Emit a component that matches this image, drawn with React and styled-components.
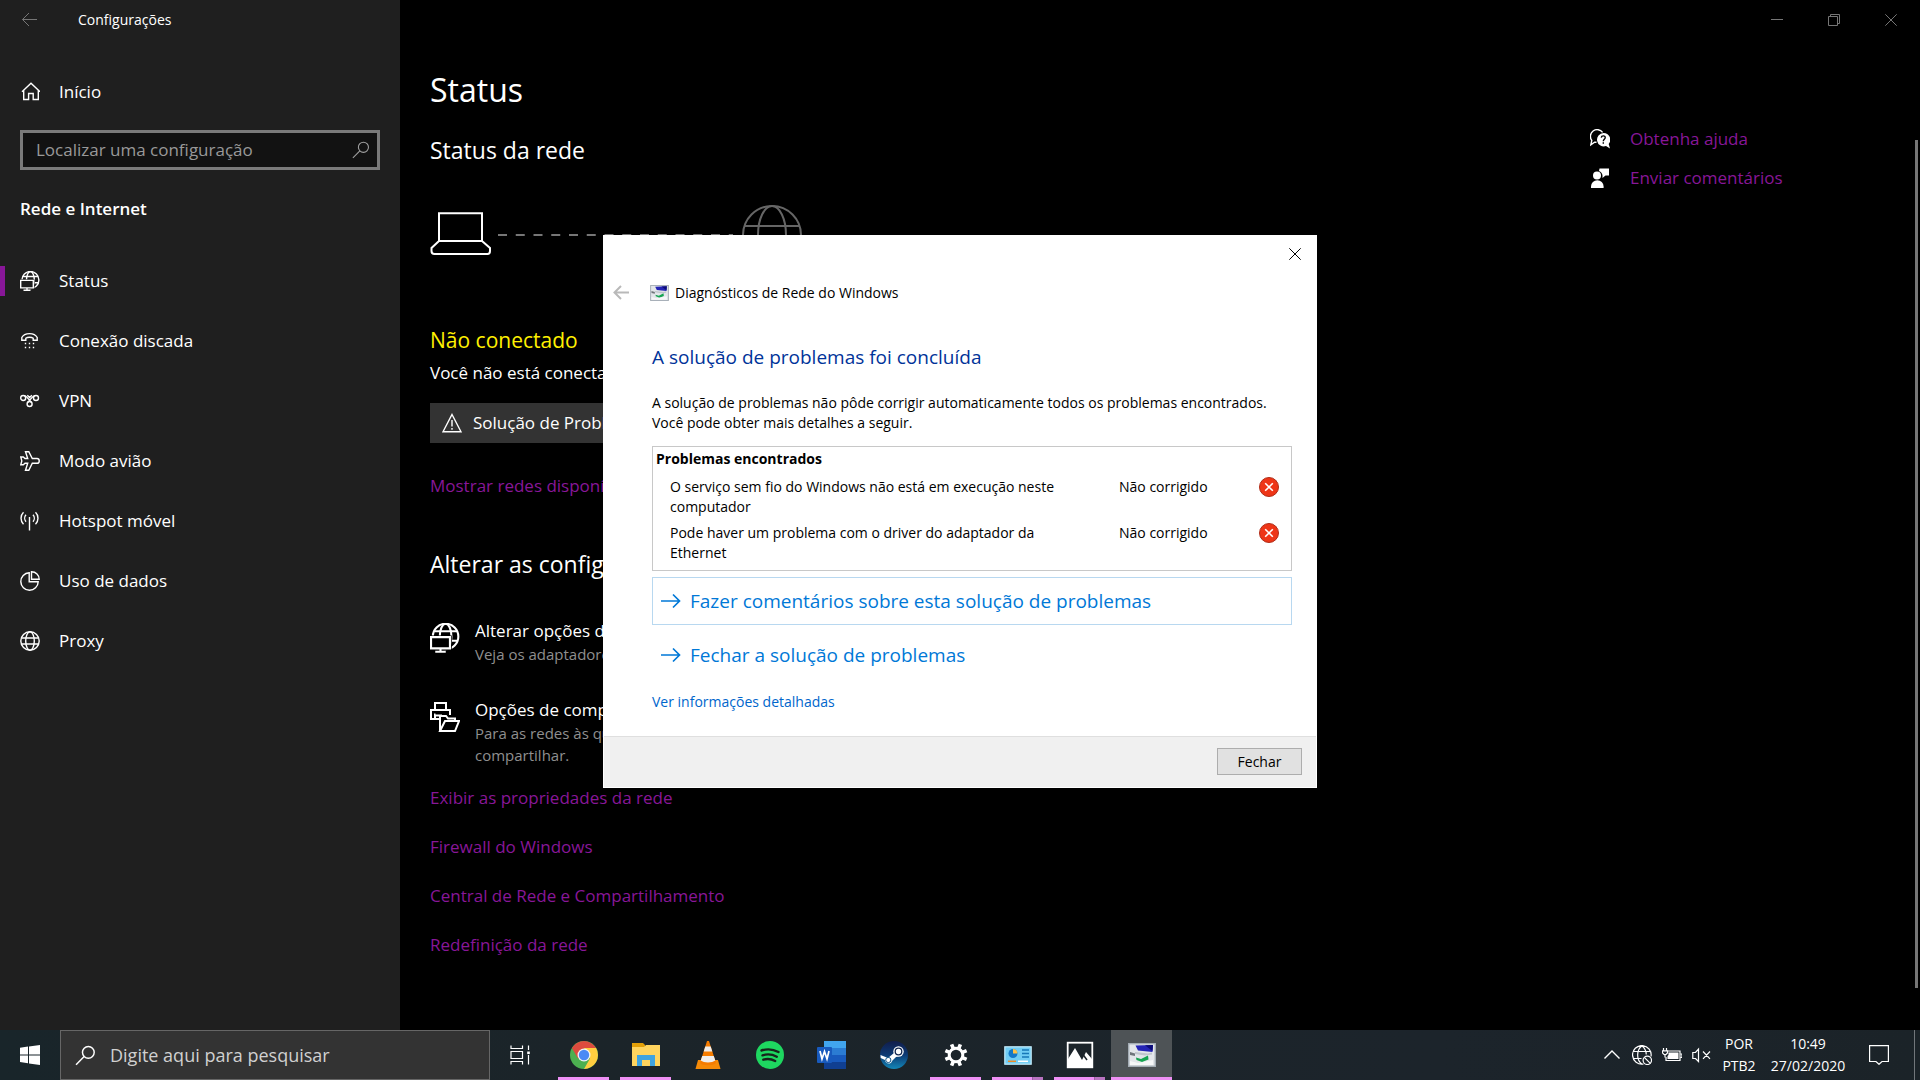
import styled, { createGlobalStyle } from "styled-components";
import { useState } from 'react'

const GlobalStyle = createGlobalStyle`
  * {
    box-sizing: border-box;
  }

  body {
    margin: 0;
    background: #000;
    font-family: "Open Sans", "Noto Sans", sans-serif;
    font-size: 17px;
    line-height: 24px;
    color: #fff;
    overflow: hidden;
  }

  h1, h2, h3, p, ul {
    margin: 0;
    padding: 0;
    font-weight: 400;
  }

  button, input {
    font: inherit;
    color: inherit;
    border: none;
    background: none;
    padding: 0;
    border-radius: 0;
  }

  a {
    color: inherit;
    text-decoration: none;
  }

  svg {
    display: block;
    flex: none;
  }
`

const Desktop = styled.div`
  display: flex;
  flex-direction: column;
  height: 100vh;
`

const SettingsWindow = styled.div`
  display: flex;
  flex: 1;
  min-height: 0;
`

/* sidebar */

const Sidebar = styled.aside`
  width: 400px;
  flex: none;
  background: #1f1f1f;
`

const TitleBar = styled.div`
  display: flex;
  align-items: center;
  gap: 38px;
  height: 40px;
  padding-left: 20px;
  font-size: 14px;
`

const HomeLink = styled.a`
  display: flex;
  align-items: center;
  gap: 19px;
  height: 60px;
  margin-top: 22px;
  padding-left: 20px;
`

const SettingSearch = styled.label`
  display: flex;
  align-items: center;
  height: 40px;
  margin: 8px 20px 0;
  padding: 0 7px 0 13px;
  border: 3px solid #7a7a7a;
  background: #121212;
  color: #a0a0a0;
`

const SettingInput = styled.input`
  flex: 1;
  min-width: 0;
  outline: none;

  &::placeholder {
    color: #999;
    opacity: 1;
  }
`

const GroupName = styled.h2`
  margin: 27px 20px 30px;
  font-size: 17px;
  font-weight: 600;
`

const NavItem = styled.a`
  display: flex;
  align-items: center;
  gap: 19px;
  height: 60px;
  padding-left: 20px;
  background: ${p => p.$active
    ? 'linear-gradient(#881798, #881798) 0 50% / 5px 30px no-repeat'
    : 'none'};
`

/* settings page */

const Page = styled.main`
  display: flex;
  flex-direction: column;
  flex: 1;
  min-width: 0;
`

const WindowControls = styled.div`
  display: flex;
  justify-content: flex-end;
  height: 40px;
  padding-right: 1px;
`

const ControlButton = styled.button`
  display: flex;
  align-items: center;
  justify-content: center;
  width: 57px;
  color: #767676;
`

const PageBody = styled.div`
  display: flex;
  flex: 1;
  min-height: 0;
`

const Content = styled.div`
  flex: 1;
  min-width: 0;
  padding: 28px 0 0 30px;
`

const PageTitle = styled.h1`
  font-size: 32px;
  line-height: 44px;
`

const SectionTitle = styled.h2`
  margin-top: ${p => p.$top}px;
  font-size: 23px;
  line-height: 32px;
`

const NetworkMap = styled.div`
  margin-top: 39px;
`

const StatusTitle = styled.h3`
  margin: 61px 0 7px;
  font-size: 21px;
  line-height: 28px;
  color: #fff100;
`

const TroubleshootButton = styled.button`
  display: flex;
  align-items: center;
  gap: 11px;
  height: 40px;
  margin: 18px 0 31px;
  padding: 0 16px 0 12px;
  background: #333;
`

const PurpleLink = styled.a`
  display: block;
  width: fit-content;
  color: #881798;
`

const OptionLink = styled.a`
  display: flex;
  gap: 15px;
  margin-top: ${p => p.$top}px;

  svg {
    margin-top: 4px;
  }
`

const OptionNote = styled.p`
  max-width: 480px;
  font-size: 15px;
  line-height: 22px;
  color: #8f8f8f;
`

const RelatedLinks = styled.nav`
  display: flex;
  flex-direction: column;
  gap: 25px;
  margin-top: 20px;
`

const HelpLinks = styled.nav`
  display: flex;
  flex-direction: column;
  gap: 15px;
  width: 325px;
  padding-top: 87px;
`

const HelpLink = styled.a`
  display: flex;
  align-items: center;
  gap: 20px;
  color: #881798;
`

const ScrollThumb = styled.div`
  width: 3px;
  margin: 100px 2px 42px 0;
  background: #767676;
`

/* dialog */

const DialogLayer = styled.div`
  position: fixed;
  inset: 235px 0 auto;
  display: flex;
  justify-content: center;
`

const Dialog = styled.section`
  width: 714px;
  background: #fff;
  border-bottom: 1px solid #fff;
  color: #000;
  font-size: 14px;
  line-height: 20px;
`

const DialogTop = styled.div`
  display: flex;
  justify-content: flex-end;
  height: 38px;
`

const DialogClose = styled.button`
  display: flex;
  align-items: center;
  justify-content: center;
  width: 44px;
`

const DialogTitle = styled.div`
  display: flex;
  align-items: center;
  gap: 6px;
  height: 40px;
  padding-left: 9px;

  button {
    margin-right: 12px;
  }
`

const DialogBody = styled.div`
  padding: 30px 25px 24px 49px;
`

const DialogHeading = styled.h2`
  margin-bottom: 22px;
  font-size: 19px;
  line-height: 28px;
  color: #003399;
`

const ProblemBox = styled.div`
  margin: 13px 0 6px;
  border: 1px solid #c8c8c8;
  padding: 2px 3px 4px;
`

const ProblemTable = styled.table`
  width: 100%;
  border-spacing: 0;
  table-layout: fixed;

  caption {
    text-align: left;
    font-weight: 700;
    margin-bottom: 5px;
  }

  td {
    padding: 3px 0;
    vertical-align: top;
  }
`

const ProblemCell = styled.td`
  width: ${p => p.$width};

  &:first-child > div {
    padding: 0 40px 0 14px;
  }
`

const CommandLink = styled.button`
  display: flex;
  align-items: center;
  gap: 9px;
  width: 100%;
  height: 48px;
  margin-bottom: 6px;
  padding-left: 8px;
  border: 1px solid ${p => p.$focused ? '#b8d8f0' : 'transparent'};
  font-size: 19px;
  color: #0078d7;
`

const DetailsLink = styled.a`
  display: block;
  width: fit-content;
  margin-top: 13px;
  color: #0066cc;
`

const DialogFooter = styled.div`
  display: flex;
  justify-content: flex-end;
  padding: 11px 14px 12px;
  margin: 0 1px;
  border-top: 1px solid #dfdfdf;
  background: #f0f0f0;
`

const CloseButton = styled.button`
  width: 85px;
  height: 27px;
  border: 1px solid #adadad;
  background: #e1e1e1;
`

/* taskbar */

const Taskbar = styled.footer`
  display: flex;
  height: 50px;
  flex: none;
  background: linear-gradient(90deg, #19252a, #1b2429 30%, #1c242b 75%, #1b2328);
`

const TaskbarButton = styled.button`
  display: flex;
  align-items: center;
  justify-content: center;
  width: ${p => p.$width}px;
`

const TaskbarSearch = styled.label`
  display: flex;
  align-items: center;
  gap: 14px;
  width: 430px;
  padding: 0 14px;
  border: 1px solid #666;
  background: #333;
`

const TaskbarInput = styled.input`
  flex: 1;
  min-width: 0;
  font-size: 18px;
  outline: none;

  &::placeholder {
    color: #d0d0d0;
    opacity: 1;
  }
`

const Apps = styled.div`
  display: flex;
  gap: 1px;
  flex: 1;
  padding-left: 3px;
`

const AppButton = styled.button`
  display: flex;
  flex-direction: column;
  align-items: center;
  width: 61px;
  padding-top: 11px;
  background: ${p => p.$active ? '#4e5356' : 'none'};
`

const AppBar = styled.span`
  width: ${p => p.$full ? '100%' : '51px'};
  height: 3px;
  margin-top: 8px;
  background: ${p => p.$stacked
    ? 'linear-gradient(90deg, #ee90f5 40px, #7d4d85 40px, #b873c0 41px)'
    : '#ee90f5'};
`

const Tray = styled.div`
  display: flex;
  align-items: center;
`

const TrayIcons = styled.div`
  display: flex;
  align-items: center;
  gap: 10px;
  margin-right: 10px;
`

const TrayText = styled.button`
  width: ${p => p.$width}px;
  font-size: 14px;
  line-height: 22px;
  text-align: center;
`

const ShowDesktop = styled.button`
  width: 6px;
  height: 50px;
  border-left: 1px solid #71767a;
`

const Icon = ({ size = 20, children, width = 1.4, ...rest }) => (
  <svg
    width={size}
    height={size}
    viewBox="0 0 20 20"
    fill="none"
    stroke="currentColor"
    strokeWidth={width}
    aria-hidden="true"
    {...rest}
  >
    {children}
  </svg>
)

const BackIcon = ({ color, width = 1 }) => (
  <Icon width={width} stroke={color}><path d="M17 9.5H2.5M9 3L2.5 9.5L9 16" /></Icon>
)

const HomeIcon = () => (
  <Icon><path d="M2 9.8L11 1.3L20 9.8M3.700 8.500V17.500H8.600V11.500H13.200V17.500H18.300V8.500" /></Icon>
)

const SearchIcon = ({ size, width = 1.2 }) => (
  <Icon size={size} width={width}><circle cx="12.7" cy="7" r="5.6" /><path d="M8.7 11L1 18.8" /></Icon>
)

// the screen is filled so that it hides the part of the globe behind it
const NetworkIcon = ({ size, width, fill = '#1f1f1f' }) => (
  <Icon size={size} width={width}>
    <circle cx="10.4" cy="9" r="8.500" />
    <ellipse cx="10.4" cy="9" rx="3.900" ry="8.500" />
    <path d="M3 5.500H18M2 11.800H18.500" />
    <path d="M-.5 8.300H14.500V18.500H-.5Z" fill={fill} stroke="none" />
    <path d="M.7 9.400H13.300V16.900H.7ZM7 16.900V19.200M3.500 19.200H10.500" />
  </Icon>
)

const DialupIcon = () => (
  <Icon>
    <path d="M1.800 9.200V6.500C4.500 1.300 14.500 1.300 17.200 6.500V9.200H13.200V7.200C11.500 6 7.500 6 5.800 7.200V9.200Z" />
    <path d="M4.800 12.500H6.200M8.800 12.500H10.200M12.800 12.500H14.200M4.800 16.500H6.200M8.800 16.500H10.200M12.800 16.500H14.200" />
  </Icon>
)

const VpnIcon = () => (
  <Icon>
    <circle cx="3.200" cy="7" r="2.500" />
    <circle cx="16" cy="7" r="2.500" />
    <circle cx="9.600" cy="13" r="2.500" />
    <path d="M4 4.600C6.500 4.300 8.500 8.500 11.300 11.200M15.200 4.600C12.700 4.600 10.500 8.500 7.900 11.200M7.300 4.300L9.600 6.600L11.900 4.300" />
  </Icon>
)

const PlaneIcon = () => (
  <Icon>
    <path d="M5.500.8H8.800L12.300 7.500H17C20 7.500 20 12.300 17 12.300H12.300L8.800 19.200H5.500L7.700 12.300H5L3.300 13.800H.8L1.800 9.900L.8 6H3.300L5 7.500H7.700Z" />
  </Icon>
)

const HotspotIcon = () => (
  <Icon>
    <path d="M9.500 6V19.500M3.500 1.300C.2 4.500.2 10 3.500 13.200M15.500 1.300C18.800 4.500 18.800 10 15.500 13.200M6 3.800C4.300 5.700 4.300 8.800 6 10.700M13 3.800C14.700 5.700 14.700 8.800 13 10.700" />
  </Icon>
)

const DataIcon = () => (
  <Icon><path d="M9.200 1.800A8.700 8.700 0 1 0 18.200 10.700H9.200ZM11.500.8V8.300H19.200C19.200 4 15.900.8 11.500.8Z" /></Icon>
)

const GlobeIcon = ({ size, width }) => (
  <Icon size={size} width={width}>
    <circle cx="10" cy="10" r="9.2" />
    <ellipse cx="10" cy="10" rx="4.300" ry="9.200" />
    <path d="M1.500 7H18.500M1.500 13H18.500" />
  </Icon>
)

const ShareIcon = () => (
  <svg width="30" height="30" viewBox="0 0 30 30" fill="none" stroke="#fff" strokeWidth="2" aria-hidden="true">
    <path d="M5 7V1H16V7M9 17H1V8H20V13M4 12.500H5.500M5 17V13.500H12" />
    <path d="M10 29V14H16L18 16.500H25V19M10 29L15 19H29L25 29Z" />
  </svg>
)

const WarningIcon = () => (
  <Icon><path d="M10 1.500L19 18.800H1Z" /><path d="M10 7V13.500M10 15V16.800" /></Icon>
)

const HelpIcon = () => (
  <Icon stroke="#fff">
    <path d="M6.500 13.200H4.600L.8 15.800L1.800 11.500A6.500 6.500 0 1 1 12.600 3.300" />
    <path d="M13.500 4A6.700 6.700 0 1 0 16 17L20 19.600L18.700 15A6.700 6.700 0 0 0 13.500 4Z" fill="#fff" stroke="none" />
    <path d="M11.300 8.600C11.500 6.200 15.300 6.300 15.200 8.700C15.100 10.300 13.300 10.400 13.300 12.200M13.300 13.300V14.700" stroke="#000" />
  </Icon>
)

const FeedbackIcon = () => (
  <Icon>
    <path d="M9.500.5H19V7.500H15.500L12.500 10V7.500A5.500 5.500 0 0 0 9 3Z" fill="#fff" stroke="none" />
    <circle cx="7" cy="7.500" r="4" fill="#fff" stroke="none" />
    <path d="M1 20V18.500A6.300 6.300 0 0 1 13.600 18.500V20Z" fill="#fff" stroke="none" />
  </Icon>
)

const MapDrawing = () => (
  <svg width="374" height="60" viewBox="0 0 374 60" fill="none" strokeWidth="2" role="img" aria-label="Sem conexão">
    <g stroke="#fff">
      <path d="M9 8.200H52V36H9ZM9 36L1.500 43V46Q1.500 49 4.500 49H57.500Q60 49 60 46V43L52 36" />
    </g>
    <path d="M68 30H303" stroke="#767676" strokeDasharray="9 8.750" />
    <g stroke="#666">
      <circle cx="342" cy="30" r="29" />
      <ellipse cx="342" cy="30" rx="14" ry="29" />
      <path d="M315 21H369M315 40H369" />
    </g>
  </svg>
)

const DiagnosticsIcon = ({ width, height }) => (
  <svg width={width} height={height} viewBox="0 0 28 24" aria-hidden="true">
    <rect x=".7" y=".7" width="26.600" height="22.600" fill="#e3e6ea" stroke="#a3acb4" strokeWidth="1.400" />
    <path d="M7.500 2.500L25 2L24.500 9L10 7.500Z" fill="#2424b4" />
    <path d="M17 2.300L25 2L24.500 8Z" fill="#0b0b78" />
    <path d="M7 9L20 10.500L24 9.500V11.500L17 12.500L7 11Z" fill="#c0c6cc" />
    <path d="M2 9L7 10.500V13L2 12Z" fill="#6f757a" />
    <path d="M8 14.500L13 16L20 12.500L20.500 16.500L14 19L8.500 17Z" fill="#17a552" />
    <path d="M2 18L10 20L25 17V22H2Z" fill="#f6f7f8" />
  </svg>
)

const ErrorIcon = () => (
  <svg width="20" height="20" viewBox="0 0 20 20" role="img" aria-label="Erro">
    <circle cx="10" cy="10" r="9.500" fill="#ee3517" stroke="#b02c17" />
    <path d="M6.200 6.200L13.800 13.800M13.800 6.200L6.200 13.800" stroke="#fff" strokeWidth="1.600" />
  </svg>
)

const ArrowIcon = () => (
  <Icon width={1.7}><path d="M0 10H18.500M12 3.500L18.500 10L12 16.500" /></Icon>
)

const CrossIcon = () => (
  <svg width="12" height="12" viewBox="0 0 12 12" stroke="currentColor" aria-hidden="true">
    <path d="M.3.3L11.700 11.700M11.700.3L.3 11.700" />
  </svg>
)

const AppIcon = ({ children }) => (
  <svg width="28" height="28" viewBox="0 0 28 28" aria-hidden="true">{children}</svg>
)

const ChromeIcon = () => (
  <AppIcon>
    <circle cx="14" cy="14" r="14" fill="#4caf50" />
    <path d="M14 14L1.900 7A14 14 0 0 1 26.100 7H14Z" fill="#dd4b3e" />
    <path d="M1.900 7L8 17.500L14 7Z" fill="#dd4b3e" />
    <path d="M14 7H26.100A14 14 0 0 1 14 28L20 17.500Z" fill="#ffcd40" />
    <circle cx="14" cy="14" r="6.500" fill="#f2f2f2" />
    <circle cx="14" cy="14" r="5.200" fill="#4a8af4" />
  </AppIcon>
)

const FolderIcon = () => (
  <AppIcon>
    <path d="M0 2H11L13 4V8H0Z" fill="#e3a008" />
    <path d="M0 6H12L14 4H28V25H0Z" fill="#ffd45e" />
    <path d="M5 25V14H23V25H18V19H10V25Z" fill="#3fa3e0" />
  </AppIcon>
)

const VlcIcon = () => (
  <AppIcon>
    <path d="M4 19H24L26.500 28H1.500Z" fill="#f58a07" />
    <path d="M13 0H15L22 22C20 25 8 25 6 22Z" fill="#f57c00" />
    <path d="M11.300 5.500H16.700L18.300 10.500H9.700Z" fill="#eee" />
    <path d="M8.200 15H19.800L21.300 19.500C18 22 10 22 6.700 19.500Z" fill="#eee" />
  </AppIcon>
)

const SpotifyIcon = () => (
  <AppIcon>
    <circle cx="14" cy="14" r="14" fill="#1ed760" />
    <path d="M5.500 9.500C11 7.700 17.500 8.300 22.500 11M6.500 14.300C11.500 12.700 16.500 13.300 20.800 15.700M7.300 18.700C11.500 17.500 15.500 18 19.200 20" fill="none" stroke="#17241c" strokeWidth="2.400" strokeLinecap="round" />
  </AppIcon>
)

const WordIcon = () => (
  <svg width="29" height="28" viewBox="0 0 29 28" aria-hidden="true">
    <path d="M7 0H29V7H7Z" fill="#41a5ee" />
    <path d="M7 7H29V14H7Z" fill="#2b7cd3" />
    <path d="M7 14H29V21H7Z" fill="#185abd" />
    <path d="M7 21H29V28H7Z" fill="#103f91" />
    <rect y="6" width="15" height="16" rx="1" fill="#185abd" />
    <path d="M3 10L5 18L7.500 10.500L10 18L12 10" fill="none" stroke="#fff" strokeWidth="1.700" />
  </svg>
)

const SteamIcon = () => (
  <AppIcon>
    <defs>
      <linearGradient id="steam" x2="0" y2="1">
        <stop stopColor="#111d4b" />
        <stop offset=".5" stopColor="#0d3a74" />
        <stop offset="1" stopColor="#1387b8" />
      </linearGradient>
    </defs>
    <circle cx="14" cy="14" r="14" fill="url(#steam)" />
    <path d="M.5 14L8 17L14 12L16 7L22 14L16 16L12 20C11 24 5 23 5 19L.7 17Z" fill="#fff" />
    <circle cx="18.500" cy="10.500" r="5.200" fill="#fff" />
    <circle cx="18.500" cy="10.500" r="3.300" fill="none" stroke="#12264f" strokeWidth="1.300" />
    <circle cx="8.300" cy="19" r="2.600" fill="none" stroke="#12568a" />
  </AppIcon>
)

const GearIcon = () => (
  <AppIcon>
    <g fill="none" stroke="#fff">
      <circle cx="14" cy="14" r="6.800" strokeWidth="3" />
      {[22.5, 67.5, 112.5, 157.5].map(a => (
        <path key={a} d="M14 2.500V7M14 21V25.500" strokeWidth="3.600" transform={`rotate(${a} 14 14)`} />
      ))}
    </g>
  </AppIcon>
)

const PanelIcon = () => (
  <AppIcon>
    <rect x=".8" y="5.800" width="26.400" height="17.400" fill="#71cdf4" stroke="#c5ebfb" strokeWidth="1.200" />
    <circle cx="9" cy="12.500" r="4.500" fill="#1479c9" />
    <path d="M9 12.500V8A4.500 4.500 0 0 1 13.500 12.500Z" fill="#ffc247" />
    <path d="M18 9H25M18 12.500H25M18 16H25" stroke="#1778b8" strokeWidth="1.500" />
    <path d="M4 20.300H12" stroke="#f08a24" strokeWidth="1.500" />
    <path d="M14 20.300H24" stroke="#fff" strokeWidth="1.500" />
  </AppIcon>
)

const PhotosIcon = () => (
  <AppIcon>
    <rect x="1.700" y="1.700" width="24.600" height="24.600" fill="none" stroke="#fff" strokeWidth="1.800" />
    <path d="M2 18L9 7L16 19L20 11L26 18V26H2Z" fill="#fff" />
    <path d="M15.500 11.500L21 19" stroke="#1c242a" strokeWidth="1.500" />
  </AppIcon>
)

const WindowsLogo = () => (
  <svg width="20" height="20" viewBox="0 0 20 20" fill="#fff" aria-hidden="true">
    <path d="M0 2.800L8 1.600V9.400H0ZM9 1.500L20 0V9.400H9ZM0 10.400H8V18.300L0 17.100ZM9 10.400H20V20L9 18.500Z" />
  </svg>
)

const TaskViewIcon = () => (
  <Icon width={1.2}>
    <path d="M1 .5V3.500H12.500V.5M1 6.500H12.500V13.500H1ZM1 19.500V16.500H12.500V19.500M18.500.5V5M18.500 10V19.500" />
    <rect x="17.200" y="6.500" width="2.600" height="2.600" fill="#fff" stroke="none" />
  </Icon>
)

const OfflineIcon = () => (
  <Icon width={1.2}>
    <path d="M11.500 19A9.300 9.300 0 1 1 19 11.500M10 19.200C4.200 15 4.200 5 10 .8C13 3.500 14.300 6.500 14.200 9.500M1.500 6.500H18.500M1.500 13.500H9.500" />
    <circle cx="15.300" cy="15.300" r="4.200" />
    <path d="M12.300 12.300L18.300 18.300" />
  </Icon>
)

const BatteryIcon = () => (
  <Icon width={1.2}>
    <path d="M5.500 6H18V15.500H4V12" />
    <path d="M6.500 7.500H16.500V14H5.500V11L6.500 10Z" fill="#fff" stroke="none" />
    <path d="M18.300 9H20V12.500H18.300" />
    <path d="M1.500 3V5.500M4.500 3V5.500M.5 5.800H5.500V8L4 9.500H2L.5 8ZM3 9.500V12.500" />
  </Icon>
)

const MutedIcon = () => (
  <Icon width={1.2}><path d="M6.500 4V16.500L3.500 13.500H.8V7.500H3.500ZM11 6.500L18 13.800M18 6.500L11 13.800" /></Icon>
)

const NoticeIcon = () => (
  <Icon width={1.2}><path d="M.6.600H19.400V16.500H13L10 19.300L7 16.500H.6Z" /></Icon>
)

const navItems = [
  { label: 'Status', icon: <NetworkIcon /> },
  { label: 'Conexão discada', icon: <DialupIcon /> },
  { label: 'VPN', icon: <VpnIcon /> },
  { label: 'Modo avião', icon: <PlaneIcon /> },
  { label: 'Hotspot móvel', icon: <HotspotIcon /> },
  { label: 'Uso de dados', icon: <DataIcon /> },
  { label: 'Proxy', icon: <GlobeIcon /> },
]

const relatedLinks = [
  'Exibir as propriedades da rede',
  'Firewall do Windows',
  'Central de Rede e Compartilhamento',
  'Redefinição da rede',
]

const problems = [
  'O serviço sem fio do Windows não está em execução neste computador',
  'Pode haver um problema com o driver do adaptador da Ethernet',
]

const apps = [
  { name: 'Chrome', icon: <ChromeIcon />, open: true },
  { name: 'Explorador de Arquivos', icon: <FolderIcon />, open: true },
  { name: 'VLC', icon: <VlcIcon /> },
  { name: 'Spotify', icon: <SpotifyIcon /> },
  { name: 'Word', icon: <WordIcon /> },
  { name: 'Steam', icon: <SteamIcon /> },
  { name: 'Configurações', icon: <GearIcon />, open: true },
  { name: 'Painel de Controle', icon: <PanelIcon />, open: true, stacked: true },
  { name: 'Fotos', icon: <PhotosIcon />, open: true, stacked: true },
  { name: 'Diagnósticos', icon: <AppIcon><g transform="translate(0 2)"><DiagnosticsIcon width={28} height={24} /></g></AppIcon>, open: true, active: true },
]

const SettingsSidebar = () => {
  const [query, setQuery] = useState('')

  return (
    <Sidebar>
      <TitleBar>
        <button aria-label="Voltar"><BackIcon color="#767676" /></button>
        <span>Configurações</span>
      </TitleBar>
      <HomeLink href="#inicio"><HomeIcon />Início</HomeLink>
      <SettingSearch>
        <SettingInput
          aria-label="Localizar uma configuração"
          placeholder="Localizar uma configuração"
          value={query}
          onChange={e => setQuery(e.target.value)}
        />
        <SearchIcon size={18} />
      </SettingSearch>
      <GroupName>Rede e Internet</GroupName>
      <nav>
        {navItems.map((item, i) => (
          <NavItem key={item.label} href="#" $active={i === 0}>
            {item.icon}
            {item.label}
          </NavItem>
        ))}
      </nav>
    </Sidebar>
  )
}

const StatusPage = () => (
  <Page>
    <WindowControls>
      <ControlButton aria-label="Minimizar">
        <svg width="12" height="12" stroke="currentColor"><path d="M0 5.500H12" /></svg>
      </ControlButton>
      <ControlButton aria-label="Restaurar">
        <svg width="12" height="12" fill="none" stroke="currentColor"><path d="M.5 2.500H9.500V11.500H.5ZM2.500 2.500V.5H11.500V9.500H9.500" /></svg>
      </ControlButton>
      <ControlButton aria-label="Fechar janela"><CrossIcon /></ControlButton>
    </WindowControls>
    <PageBody>
      <Content>
        <PageTitle>Status</PageTitle>
        <SectionTitle $top={22}>Status da rede</SectionTitle>
        <NetworkMap><MapDrawing /></NetworkMap>
        <StatusTitle>Não conectado</StatusTitle>
        <p>Você não está conectado</p>
        <TroubleshootButton><WarningIcon />Solução de Problemas</TroubleshootButton>
        <PurpleLink href="#">Mostrar redes disponíveis</PurpleLink>
        <SectionTitle $top={50}>Alterar as configurações</SectionTitle>
        <OptionLink href="#" $top={39}>
          <NetworkIcon size={30} fill="#000" />
          <div>
            Alterar opções do adaptador
            <OptionNote>Veja os adaptadores de rede</OptionNote>
          </div>
        </OptionLink>
        <OptionLink href="#" $top={33}>
          <ShareIcon />
          <div>
            Opções de compartilhamento
            <OptionNote>Para as redes às quais você se conecta, decida o que deseja compartilhar.</OptionNote>
          </div>
        </OptionLink>
        <RelatedLinks>
          {relatedLinks.map(text => <PurpleLink key={text} href="#">{text}</PurpleLink>)}
        </RelatedLinks>
      </Content>
      <HelpLinks>
        <HelpLink href="#"><HelpIcon />Obtenha ajuda</HelpLink>
        <HelpLink href="#"><FeedbackIcon />Enviar comentários</HelpLink>
      </HelpLinks>
      <ScrollThumb />
    </PageBody>
  </Page>
)

const DiagnosticsDialog = ({ onClose }) => (
  <DialogLayer>
    <Dialog role="dialog" aria-labelledby="dialog-title">
      <DialogTop>
        <DialogClose aria-label="Fechar diálogo" onClick={onClose}><CrossIcon /></DialogClose>
      </DialogTop>
      <DialogTitle>
        <button aria-label="Voltar"><BackIcon color="#b9b9b9" width={2} /></button>
        <DiagnosticsIcon width={19} height={16} />
        <span id="dialog-title">Diagnósticos de Rede do Windows</span>
      </DialogTitle>
      <DialogBody>
        <DialogHeading>A solução de problemas foi concluída</DialogHeading>
        <p>
          A solução de problemas não pôde corrigir automaticamente todos os problemas encontrados.
          <br />
          Você pode obter mais detalhes a seguir.
        </p>
        <ProblemBox>
          <ProblemTable>
            <caption>Problemas encontrados</caption>
            <tbody>
              {problems.map(text => (
                <tr key={text}>
                  <ProblemCell $width="463px"><div>{text}</div></ProblemCell>
                  <ProblemCell $width="140px">Não corrigido</ProblemCell>
                  <ProblemCell><ErrorIcon /></ProblemCell>
                </tr>
              ))}
            </tbody>
          </ProblemTable>
        </ProblemBox>
        <CommandLink $focused><ArrowIcon />Fazer comentários sobre esta solução de problemas</CommandLink>
        <CommandLink onClick={onClose}><ArrowIcon />Fechar a solução de problemas</CommandLink>
        <DetailsLink href="#">Ver informações detalhadas</DetailsLink>
      </DialogBody>
      <DialogFooter>
        <CloseButton onClick={onClose}>Fechar</CloseButton>
      </DialogFooter>
    </Dialog>
  </DialogLayer>
)

const WindowsTaskbar = () => (
  <Taskbar>
    <TaskbarButton $width={60} aria-label="Iniciar"><WindowsLogo /></TaskbarButton>
    <TaskbarSearch>
      <SearchIcon size={21} width={1.4} />
      <TaskbarInput aria-label="Pesquisar" placeholder="Digite aqui para pesquisar" />
    </TaskbarSearch>
    <TaskbarButton $width={60} aria-label="Visão de Tarefas"><TaskViewIcon /></TaskbarButton>
    <Apps>
      {apps.map(app => (
        <AppButton key={app.name} aria-label={app.name} $active={app.active}>
          {app.icon}
          {app.open && <AppBar $stacked={app.stacked} $full={app.active} />}
        </AppButton>
      ))}
    </Apps>
    <Tray>
      <TrayIcons>
        <Icon><path d="M2.500 13.500L10 6L17.500 13.500" /></Icon>
        <OfflineIcon />
        <BatteryIcon />
        <MutedIcon />
      </TrayIcons>
      <TrayText $width={34}>POR<br />PTB2</TrayText>
      <TrayText $width={104}>10:49<br />27/02/2020</TrayText>
      <TaskbarButton $width={38} aria-label="Notificações"><NoticeIcon /></TaskbarButton>
      <TaskbarButton $width={16} aria-hidden="true" tabIndex={-1} />
      <ShowDesktop aria-label="Mostrar área de trabalho" />
    </Tray>
  </Taskbar>
)

const App = () => {
  const [dialogOpen, setDialogOpen] = useState(true)

  return (
    <>
      <GlobalStyle />
      <Desktop>
        <SettingsWindow>
          <SettingsSidebar />
          <StatusPage />
        </SettingsWindow>
        <WindowsTaskbar />
      </Desktop>
      {dialogOpen && <DiagnosticsDialog onClose={() => setDialogOpen(false)} />}
    </>
  )
}

export default App
